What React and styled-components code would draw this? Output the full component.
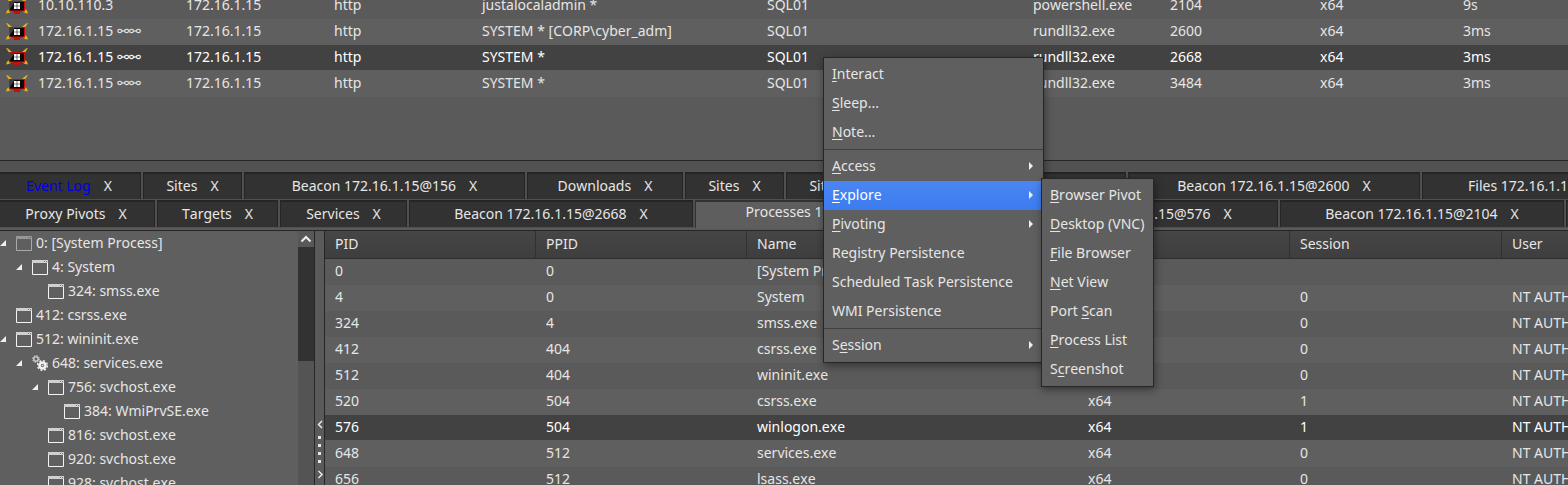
import React from "react";
import styled, { createGlobalStyle, css } from "styled-components";

const Global = createGlobalStyle`
  * { box-sizing: border-box; }
  html, body, #root { height: 100%; }
  body {
    margin: 0;
    overflow: hidden;
    background: #5a5a5a;
    color: #e6e6e6;
    font: 14px/20px "Noto Sans", "DejaVu Sans", sans-serif;
    font-kerning: none;
  }
  button { font: inherit; font-kerning: none; color: inherit; background: none; border: 0; padding: 0; margin: 0; text-align: left; white-space: nowrap; }
`;

const Window = styled.div`
  display: flex;
  flex-direction: column;
  height: 100vh;
  overflow: hidden;
`;

const BeaconPane = styled.section`
  flex: none;
  height: 161px;
  overflow: hidden;
  border-bottom: 1px solid #262626;
  background: #5a5a5a;
`;

const DataTable = styled.table`
  width: 100%;
  table-layout: fixed;
  border-collapse: separate;
  border-spacing: 0;
  margin-top: ${(p) => (p.$scrolled ? "-7px" : "0")};
`;

const HeadCell = styled.th`
  height: 28px;
  padding: 0 10px 2px;
  text-align: left;
  font-weight: 400;
  background: linear-gradient(#464646, #3e3e3e);
  border-bottom: 1px solid #2e2e2e;
  & + & { box-shadow: -1px 0 0 #313131; }
`;

const Cell = styled.td`
  height: 26px;
  padding: 0 0 2px 10px;
  overflow: hidden;
  white-space: nowrap;
`;

const Row = styled.tr`
  background: ${(p) => (p.$light ? "#5f5f5f" : "#5a5a5a")};
  ${(p) =>
    p.$selected &&
    css`
      color: #fff;
      background: #424242;
      & > td { border-bottom: 1px solid #5f5f5f; padding-bottom: 1px; }
    `}
`;

const IconCell = styled(Cell)`
  padding: 0 0 0 6px;
  line-height: 0;
`;

const Chain = styled.span`
  margin-left: 4px;
  font-family: "DejaVu Sans", sans-serif;
  line-height: 1;
`;

const Tabs = styled.nav`
  flex: none;
  display: flex;
  gap: 2px;
  height: 28px;
  overflow: hidden;
  margin-left: -3px;
  background: #505050;
  padding-bottom: 1px;
`;

const Splitter = styled.div`
  flex: none;
  height: 11px;
  background: #525252;
`;

const Tab = styled.div`
  flex: none;
  display: flex;
  align-items: center;
  justify-content: center;
  gap: 13px;
  width: ${(p) => p.$width}px;
  padding-bottom: 2px;
  border: 1px solid #252525;
  border-top-width: 2px;
  border-bottom: 0;
  background: #323232;
  ${(p) =>
    p.$selected &&
    css`
      background: #5e5e5e;
      border-color: #323232;
      padding-bottom: 6px;
      margin-bottom: -1px;
    `}
`;

const TabLabel = styled.button`
  color: ${(p) => (p.$alert ? "#0000e6" : "inherit")};
`;

const Split = styled.main`
  flex: 1;
  min-height: 0;
  display: flex;
  margin-top: 2px;
  border-top: 1px solid #262626;
`;

const TreePane = styled.aside`
  flex: none;
  display: flex;
  width: 315px;
  border-right: 1px solid #262626;
  background: #5f5f5f;
  overflow: hidden;
`;

const Tree = styled.ul`
  flex: 1;
  list-style: none;
  margin: 0;
  padding: 0;
`;

const TreeItem = styled.li`
  display: flex;
  align-items: center;
  height: 24px;
  padding-left: ${(p) => p.$level * 16}px;
`;

const Twisty = styled.svg`
  flex: none;
  margin-right: 10px;
`;

const TreeIcon = styled.svg`
  flex: none;
  margin-right: 4px;
  opacity: ${(p) => (p.$dim ? 0.5 : 1)};
`;

const ScrollBar = styled.div`
  flex: none;
  display: flex;
  flex-direction: column;
  width: 16px;
  background: #545454;
`;

const ScrollButton = styled.button`
  height: 16px;
  line-height: 0;
  background: #585858;
`;

const Thumb = styled.div`
  height: 114px;
  background: #323232;
`;

const Divider = styled.div`
  flex: none;
  width: 9px;
  padding: 187px 0 0 1px;
  background: #5a5a5a;
  line-height: 0;
`;

const ProcessPane = styled.section`
  flex: 1;
  min-width: 0;
  overflow: hidden;
  border-left: 1px solid #262626;
`;

const Menu = styled.ul`
  position: absolute;
  left: ${(p) => p.$x}px;
  top: ${(p) => p.$y}px;
  width: ${(p) => p.$width}px;
  list-style: none;
  margin: 0;
  padding: 2px 0;
  border: 1px solid #262626;
  background: #5f5f5f;
  box-shadow: 1px 3px 8px rgba(0, 0, 0, 0.4);
`;

const MenuButton = styled.button`
  display: flex;
  align-items: center;
  justify-content: space-between;
  width: 100%;
  height: 29px;
  padding: 0 9px 2px 8px;
  ${(p) =>
    p.$active &&
    css`
      color: #fff;
      background: linear-gradient(#4a86f2, #3c7cf0);
    `}
  u { text-decoration-thickness: 1px; text-underline-offset: 2px; text-decoration-skip-ink: none; }
`;

const MenuRule = styled.li`
  height: 5px;
  padding-top: 2px;
  &::after { content: ""; display: block; height: 1px; background: #404040; }
`;

function BeaconIcon() {
  return (
    <svg width="22" height="18" viewBox="0 0 22 18" aria-hidden="true">
      <path d="M0 0l2 .5L6 4 3.500 5.500zM22 0l-2 .5L16 4l2.500 1.500zM0 16.500l1-3L3.500 12 6 14l-3 2zM22 16.500l-1-3-2.500-1.500L16 14l3 2z" fill="#e0b020" />
      <path d="M3 4h16v10.500h-5V17H8v-2.500H3z" fill="#c80d0d" />
      <path d="M4 5h14v8.500H4z" fill="#0a0a0a" />
      <path d="M4 5h4.500L4 12z" fill="#3c3c3c" />
      <path d="M8 6h2.700v2.700H8zM11.300 6H14v2.700h-2.700zM8 9.300h2.700V12H8zM11.300 9.300H14V12h-2.700z" fill="#fff" />
    </svg>
  );
}

function WindowIcon({ dim }) {
  return (
    <TreeIcon $dim={dim} width="16" height="15" viewBox="0 0 16 15" aria-hidden="true">
      <path d="M.500 2v12.500h15V2" fill="none" stroke="#f4f4f4" />
      <path d="M0 0h16v3H0z" fill="#d0d0d0" />
      <path d="M12 1h1v1h-1zM14 1h1v1h-1z" fill="#777" />
    </TreeIcon>
  );
}

function GearsIcon() {
  return (
    <TreeIcon width="16" height="16" viewBox="0 0 16 16" fill="none" aria-hidden="true">
      <circle cx="4" cy="4" r="2.200" stroke="#c8c8c8" strokeWidth="1.600" />
      <circle cx="4" cy="4" r="3.500" stroke="#c8c8c8" strokeDasharray="1.400 1.350" />
      <circle cx="10.500" cy="10.500" r="3" stroke="#f2f2f2" strokeWidth="2.600" />
      <circle cx="10.500" cy="10.500" r="4.900" stroke="#f2f2f2" strokeWidth="1.400" strokeDasharray="2 1.850" />
      <circle cx="10.500" cy="10.500" r="1" fill="#d8d8d8" />
    </TreeIcon>
  );
}

const beaconCols = [28, 148, 148, 148, 285, 136, 130, 137, 150, 143];
const beacons = [
  ["10.10.110.3", "172.16.1.15", "http", "justalocaladmin *", "SQL01", "", "powershell.exe", "2104", "x64", "9s"],
  ["172.16.1.15", "172.16.1.15", "http", "SYSTEM * [CORP\\cyber_adm]", "SQL01", "", "rundll32.exe", "2600", "x64", "3ms"],
  ["172.16.1.15", "172.16.1.15", "http", "SYSTEM *", "SQL01", "", "rundll32.exe", "2668", "x64", "3ms"],
  ["172.16.1.15", "172.16.1.15", "http", "SYSTEM *", "SQL01", "", "rundll32.exe", "3484", "x64", "3ms"],
];

const tabRows = [
  [
    { label: "Event Log", width: 144, alert: true },
    { label: "Sites", width: 99 },
    { label: "Beacon 172.16.1.15@156", width: 281 },
    { label: "Downloads", width: 156 },
    { label: "Sites", width: 99 },
    { label: "Sites", width: 99 },
    { label: "Files 172.16.1.15", width: 239 },
    { label: "Beacon 172.16.1.15@2600", width: 292 },
    { label: "Files 172.16.1.15@2600", width: 266 },
  ],
  [
    { label: "Proxy Pivots", width: 158 },
    { label: "Targets", width: 121 },
    { label: "Services", width: 127 },
    { label: "Beacon 172.16.1.15@2668", width: 284 },
    { label: "Processes 172.16.1.15@576", width: 303, selected: true },
    { label: "Beacon 172.16.1.15@576", width: 278 },
    { label: "Beacon 172.16.1.15@2104", width: 284 },
    { label: "Sites", width: 99 },
  ],
];

const tree = [
  { level: 0, label: "0: [System Process]", open: true, dim: true },
  { level: 1, label: "4: System", open: true },
  { level: 2, label: "324: smss.exe" },
  { level: 0, label: "412: csrss.exe" },
  { level: 0, label: "512: wininit.exe", open: true },
  { level: 1, label: "648: services.exe", open: true, gears: true },
  { level: 2, label: "756: svchost.exe", open: true },
  { level: 3, label: "384: WmiPrvSE.exe" },
  { level: 2, label: "816: svchost.exe" },
  { level: 2, label: "920: svchost.exe" },
  { level: 2, label: "928: svchost.exe" },
];

const processCols = [211, 211, 331, 212, 212];
const processHeads = ["PID", "PPID", "Name", "Arch", "Session", "User"];
const user = "NT AUTHORITY\\SYSTEM";
const processes = [
  ["0", "0", "[System Process]", "", "", ""],
  ["4", "0", "System", "x64", "0", user],
  ["324", "4", "smss.exe", "x64", "0", user],
  ["412", "404", "csrss.exe", "x64", "0", user],
  ["512", "404", "wininit.exe", "x64", "0", user],
  ["520", "504", "csrss.exe", "x64", "1", user],
  ["576", "504", "winlogon.exe", "x64", "1", user],
  ["648", "512", "services.exe", "x64", "0", user],
  ["656", "512", "lsass.exe", "x64", "0", user],
];

/* An underscore stands before the letter that is the item's mnemonic. */
const mainMenu = [
  "_Interact", "_Sleep...", "_Note...", null,
  "_Access>", "_Explore>", "_Pivoting>", "Registry Persistence", "Scheduled Task Persistence", "WMI Persistence", null,
  "S_ession>",
];
const exploreMenu = ["_Browser Pivot", "_Desktop (VNC)", "_File Browser", "_Net View", "Port _Scan", "_Process List", "S_creenshot"];

function Mnemonic({ text }) {
  const at = text.indexOf("_");
  if (at < 0) return <span>{text}</span>;
  return (
    <span>
      {text.slice(0, at)}
      <u>{text[at + 1]}</u>
      {text.slice(at + 2)}
    </span>
  );
}

function PopupMenu({ items, active, x, y, width, label }) {
  return (
    <Menu role="menu" aria-label={label} $x={x} $y={y} $width={width}>
      {items.map((item, i) =>
        item === null ? (
          <MenuRule key={i} role="separator" />
        ) : (
          <li key={i} role="none">
            <MenuButton role="menuitem" $active={item === active}>
              <Mnemonic text={item.replace(">", "")} />
              {item.endsWith(">") && (
                <svg width="5" height="8" viewBox="0 0 5 8" aria-hidden="true">
                  <path d="M0 0l4 4-4 4z" fill="#f0f0f0" />
                </svg>
              )}
            </MenuButton>
          </li>
        )
      )}
    </Menu>
  );
}

export default function App() {
  return (
    <Window>
      <Global />
      <BeaconPane>
        <DataTable $scrolled>
          <colgroup>
            {beaconCols.map((w, i) => <col key={i} width={w} />)}
            <col />
          </colgroup>
          <tbody>
            {beacons.map((row, r) => (
              <Row key={r} $light={r % 2 === 1} $selected={r === 2}>
                <IconCell><BeaconIcon /></IconCell>
                {row.map((text, c) => (
                  <Cell key={c}>
                    {text}
                    {c === 0 && r > 0 && <Chain>⚯⚯</Chain>}
                  </Cell>
                ))}
              </Row>
            ))}
          </tbody>
        </DataTable>
      </BeaconPane>
      <Splitter />
      {tabRows.map((tabs, r) => (
        <Tabs key={r}>
          {tabs.map((tab, i) => (
            <Tab key={i} $width={tab.width} $selected={tab.selected}>
              <TabLabel $alert={tab.alert}>{tab.label}</TabLabel>
              <button aria-label={"Close " + tab.label}>X</button>
            </Tab>
          ))}
        </Tabs>
      ))}
      <Split>
        <TreePane>
          <Tree>
            {tree.map((node) => (
              <TreeItem key={node.label} $level={node.level}>
                <Twisty width="6" height="6" viewBox="0 0 6 6" aria-hidden="true">
                  {node.open && <path d="M6 0v6H0z" fill="#f0f0f0" />}
                </Twisty>
                {node.gears ? <GearsIcon /> : <WindowIcon dim={node.dim} />}
                {node.label}
              </TreeItem>
            ))}
          </Tree>
          <ScrollBar>
            <ScrollButton aria-label="Scroll up">
              <svg width="16" height="16" viewBox="0 0 16 16" aria-hidden="true">
                <path d="M3.500 10.500L8 6l4.500 4.500" fill="none" stroke="#f0f0f0" strokeWidth="2" />
              </svg>
            </ScrollButton>
            <Thumb />
          </ScrollBar>
        </TreePane>
        <Divider>
          <svg width="8" height="62" viewBox="0 0 8 62" aria-hidden="true">
            <path d="M6 3L2.500 6.500 6 10M2.500 53L6 56.500 2.500 60" fill="none" stroke="#f0f0f0" strokeWidth="1.400" />
            <path d="M2 18h3v3H2zM2 26h3v3H2zM2 34h3v3H2zM2 42h3v3H2z" fill="#e6e6e6" />
          </svg>
        </Divider>
        <ProcessPane>
          <DataTable>
            <colgroup>
              {processCols.map((w, i) => <col key={i} width={w} />)}
              <col />
            </colgroup>
            <thead>
              <tr>{processHeads.map((h) => <HeadCell key={h}>{h}</HeadCell>)}</tr>
            </thead>
            <tbody>
              {processes.map((row, r) => (
                <Row key={r} $light={r % 2 === 1} $selected={r === 6}>
                  {row.map((text, c) => <Cell key={c}>{text}</Cell>)}
                </Row>
              ))}
            </tbody>
          </DataTable>
        </ProcessPane>
      </Split>
      <PopupMenu label="Beacon" items={mainMenu} active="_Explore>" x={823} y={57} width={221} />
      <PopupMenu label="Explore" items={exploreMenu} x={1041} y={178} width={113} />
    </Window>
  );
}
